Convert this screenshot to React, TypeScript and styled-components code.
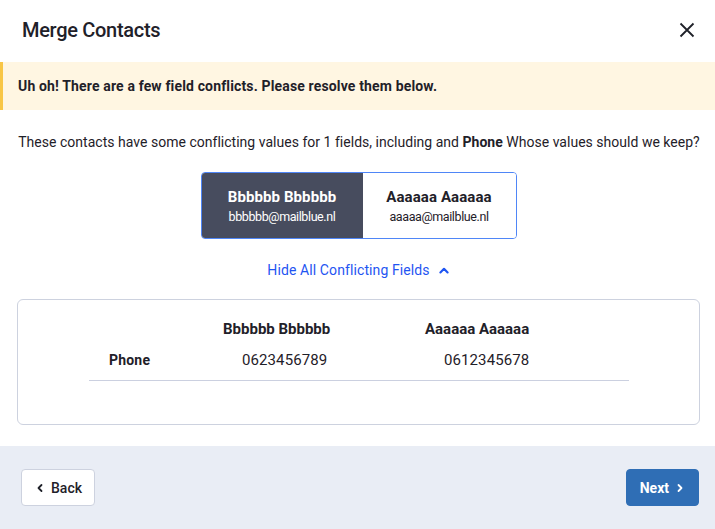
import styled, { createGlobalStyle } from 'styled-components'

const GlobalStyle = createGlobalStyle`
  html, body {
    margin: 0;
    padding: 0;
    background: #fff;
  }
  body {
    font-family: Roboto, 'Noto Sans', sans-serif;
    color: #1f2129;
  }
`

const Modal = styled.div`
  width: 715px;
  height: 529px;
  display: flex;
  flex-direction: column;
  background: #fff;
  overflow: hidden;
`

const Header = styled.div`
  height: 62px;
  display: flex;
  align-items: center;
  justify-content: space-between;
  padding: 0 18px 2px 22px;
  box-sizing: border-box;
`

const Title = styled.h1`
  margin: 0;
  font-size: 20px;
  font-weight: 500;
  letter-spacing: -0.3px;
`

const CloseButton = styled.button`
  border: 0;
  background: none;
  padding: 0;
  width: 20px;
  height: 20px;
  display: flex;
  align-items: center;
  justify-content: center;
  cursor: pointer;
`

const Banner = styled.div`
  height: 48px;
  display: flex;
  align-items: center;
  background: #fff6e2;
  border-left: 3px solid #f8c646;
  padding-left: 15px;
  font-size: 14px;
  font-weight: 700;
  letter-spacing: 0.15px;
`

const Body = styled.div`
  flex: 1;
  display: flex;
  flex-direction: column;
  align-items: center;
  padding: 0 15px 0 17px;
`

const Description = styled.p`
  margin: 22px 0 0;
  font-size: 14px;
  line-height: 20px;
  letter-spacing: 0.02px;
  align-self: stretch;
  text-align: center;
  padding-left: 1px;
  white-space: nowrap;
  b {
    font-weight: 700;
  }
`

const Toggle = styled.div`
  margin-top: 20px;
  display: flex;
  width: 316px;
  height: 67px;
  border: 1px solid #4f86f7;
  border-radius: 4px;
  overflow: hidden;
  box-sizing: border-box;
`

const ToggleOption = styled.button<{ $active?: boolean }>`
  flex: ${(p) => (p.$active ? '0 0 161px' : '1')};
  border: 0;
  margin: 0;
  padding: 0;
  display: flex;
  flex-direction: column;
  align-items: center;
  justify-content: center;
  gap: 3px;
  background: ${(p) => (p.$active ? '#474c5e' : '#fff')};
  color: ${(p) => (p.$active ? '#fff' : '#1f2129')};
  font-family: inherit;
  cursor: pointer;
`

const OptionName = styled.span`
  font-size: 15px;
  font-weight: 700;
  letter-spacing: 0.1px;
`

const OptionEmail = styled.span`
  font-size: 12.5px;
  letter-spacing: -0.4px;
`

const ToggleLink = styled.button`
  margin-top: 23px;
  border: 0;
  background: none;
  padding: 0;
  display: flex;
  align-items: center;
  gap: 8px;
  color: #1f55f2;
  font-family: inherit;
  font-size: 14px;
  letter-spacing: 0.1px;
  cursor: pointer;
`

const Card = styled.div`
  margin-top: 21px;
  align-self: stretch;
  height: 126px;
  box-sizing: border-box;
  border: 1px solid #cdd2df;
  border-radius: 6px;
  padding: 19px 70px 0 71px;
`

const Grid = styled.div`
  display: grid;
  grid-template-columns: 134px 202px 204px;
  width: 540px;
`

const HeadCell = styled.div`
  font-size: 15px;
  font-weight: 700;
  letter-spacing: 0;
  line-height: 20px;
  padding-bottom: 11px;
`

const Cell = styled.div<{ $label?: boolean }>`
  font-size: ${(p) => (p.$label ? '14px' : '15px')};
  line-height: 20px;
  font-weight: ${(p) => (p.$label ? 700 : 400)};
  letter-spacing: ${(p) => (p.$label ? '0.2px' : '0.1px')};
  padding: 0 0 10px ${(p) => (p.$label ? '20px' : '19px')};
  border-bottom: 1px solid #cbd0e0;
`

const Footer = styled.div`
  height: 83px;
  background: #e9edf5;
  display: flex;
  align-items: center;
  justify-content: space-between;
  padding: 0 16px 0 21px;
`

const FooterButton = styled.button<{ $primary?: boolean }>`
  height: 37px;
  padding: ${(p) => (p.$primary ? '0 13px 0 13px' : '0 12px 0 13px')};
  display: flex;
  align-items: center;
  gap: 6px;
  border-radius: 4px;
  border: 1px solid ${(p) => (p.$primary ? '#2f6eb5' : '#cdd2df')};
  background: ${(p) => (p.$primary ? '#2f6eb5' : '#fff')};
  color: ${(p) => (p.$primary ? '#fff' : '#1f2129')};
  font-family: inherit;
  font-size: 14px;
  font-weight: ${(p) => (p.$primary ? 700 : 500)};
  cursor: pointer;
`

const Chevron = ({ dir, color = 'currentColor', size = 10 }: { dir: 'up' | 'left' | 'right'; color?: string; size?: number }) => {
  const d = dir === 'up' ? 'M2 7 L5 4 L8 7' : dir === 'left' ? 'M6.5 2 L3.5 5 L6.5 8' : 'M3.5 2 L6.5 5 L3.5 8'
  return (
    <svg width={size} height={size} viewBox="0 0 10 10" fill="none">
      <path d={d} stroke={color} strokeWidth="1.8" strokeLinecap="round" strokeLinejoin="round" />
    </svg>
  )
}

const App = () => {
  return (
    <>
      <GlobalStyle />
      <Modal>
        <Header>
          <Title>Merge Contacts</Title>
          <CloseButton aria-label="Close">
            <svg width="16" height="16" viewBox="0 0 16 16" fill="none">
              <path d="M1.5 1.5 L14.5 14.5 M14.5 1.5 L1.5 14.5" stroke="#1f2129" strokeWidth="1.8" />
            </svg>
          </CloseButton>
        </Header>

        <Banner>Uh oh! There are a few field conflicts. Please resolve them below.</Banner>

        <Body>
          <Description>
            These contacts have some conflicting values for 1 fields, including and <b>Phone</b> Whose values should
            we keep?
          </Description>

          <Toggle>
            <ToggleOption $active>
              <OptionName>Bbbbbb Bbbbbb</OptionName>
              <OptionEmail>bbbbbb@mailblue.nl</OptionEmail>
            </ToggleOption>
            <ToggleOption>
              <OptionName>Aaaaaa Aaaaaa</OptionName>
              <OptionEmail>aaaaa@mailblue.nl</OptionEmail>
            </ToggleOption>
          </Toggle>

          <ToggleLink>
            Hide All Conflicting Fields
            <Chevron dir="up" size={12} />
          </ToggleLink>

          <Card>
            <Grid>
              <HeadCell />
              <HeadCell>Bbbbbb Bbbbbb</HeadCell>
              <HeadCell>Aaaaaa Aaaaaa</HeadCell>
              <Cell $label>Phone</Cell>
              <Cell>0623456789</Cell>
              <Cell>0612345678</Cell>
            </Grid>
          </Card>
        </Body>

        <Footer>
          <FooterButton>
            <Chevron dir="left" />
            Back
          </FooterButton>
          <FooterButton $primary>
            Next
            <Chevron dir="right" />
          </FooterButton>
        </Footer>
      </Modal>
    </>
  )
}

export default App
